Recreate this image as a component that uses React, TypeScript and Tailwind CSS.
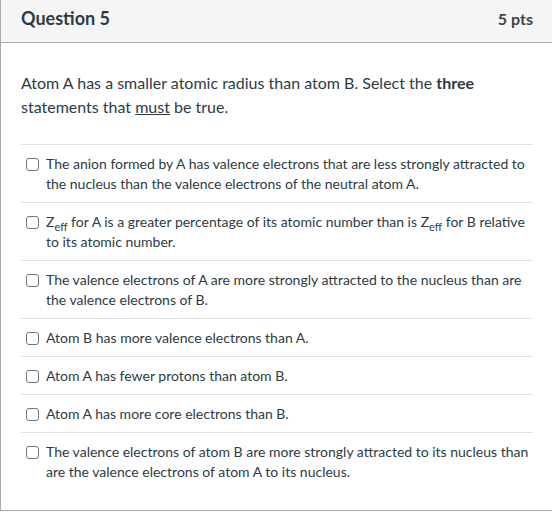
import React from 'react'

type Option = { id: number; content: React.ReactNode }

const Zeff = () => (
    <span>
        Z<span className="relative top-[4px] text-[11px] leading-none">eff</span>
    </span>
)

const options: Option[] = [
    {
        id: 1,
        content: 'The anion formed by A has valence electrons that are less strongly attracted to the nucleus than the valence electrons of the neutral atom A.',
    },
    {
        id: 2,
        content: (
            <>
                <Zeff /> for A is a greater percentage of its atomic number than is <Zeff /> for B relative to its atomic number.
            </>
        ),
    },
    {
        id: 3,
        content: 'The valence electrons of A are more strongly attracted to the nucleus than are the valence electrons of B.',
    },
    { id: 4, content: 'Atom B has more valence electrons than A.' },
    { id: 5, content: 'Atom A has fewer protons than atom B.' },
    { id: 6, content: 'Atom A has more core electrons than B.' },
    {
        id: 7,
        content: 'The valence electrons of atom B are more strongly attracted to its nucleus than are the valence electrons of atom A to its nucleus.',
    },
]

function AnswerRow({ option }: { option: Option }): JSX.Element {
    return (
        <label className="flex items-start gap-[7px] border-t border-[#dfe2e4] pb-[8px] pl-[5px] pt-[9px]">
            <span className="mt-[4px] h-[13px] w-[13px] shrink-0 rounded-[3px] border border-[#6b7780] bg-white" />
            <span className="text-[14px] leading-[20px] text-[#2d3b45]">{option.content}</span>
        </label>
    )
}

export default function App(): JSX.Element {
    return (
        <div className="h-[512px] w-[552px] bg-white font-['Lato',sans-serif] text-[#2d3b45]">
            <div className="flex h-[511px] flex-col border-b border-l border-[#a9a9a9]">
                <div className="flex h-[43px] items-baseline justify-between border-b border-[#a9a9a9] bg-[#f5f5f5] pl-[20px] pr-[19px] pt-[9px]">
                    <h2 className="text-[18px] font-bold leading-none">Question 5</h2>
                    <span className="text-[16px] font-bold leading-none text-[#3d454c]">5 pts</span>
                </div>
                <div className="pl-[20px] pr-[19px] pt-[28px]">
                    <p className="text-[16px] leading-[24px]">
                        Atom A has a smaller atomic radius than atom B. Select the <b>three</b> statements that{' '}
                        <u>must</u> be true.
                    </p>
                    <div className="mt-[25px]">
                        {options.map((option) => (
                            <AnswerRow key={option.id} option={option} />
                        ))}
                    </div>
                </div>
            </div>
        </div>
    )
}
